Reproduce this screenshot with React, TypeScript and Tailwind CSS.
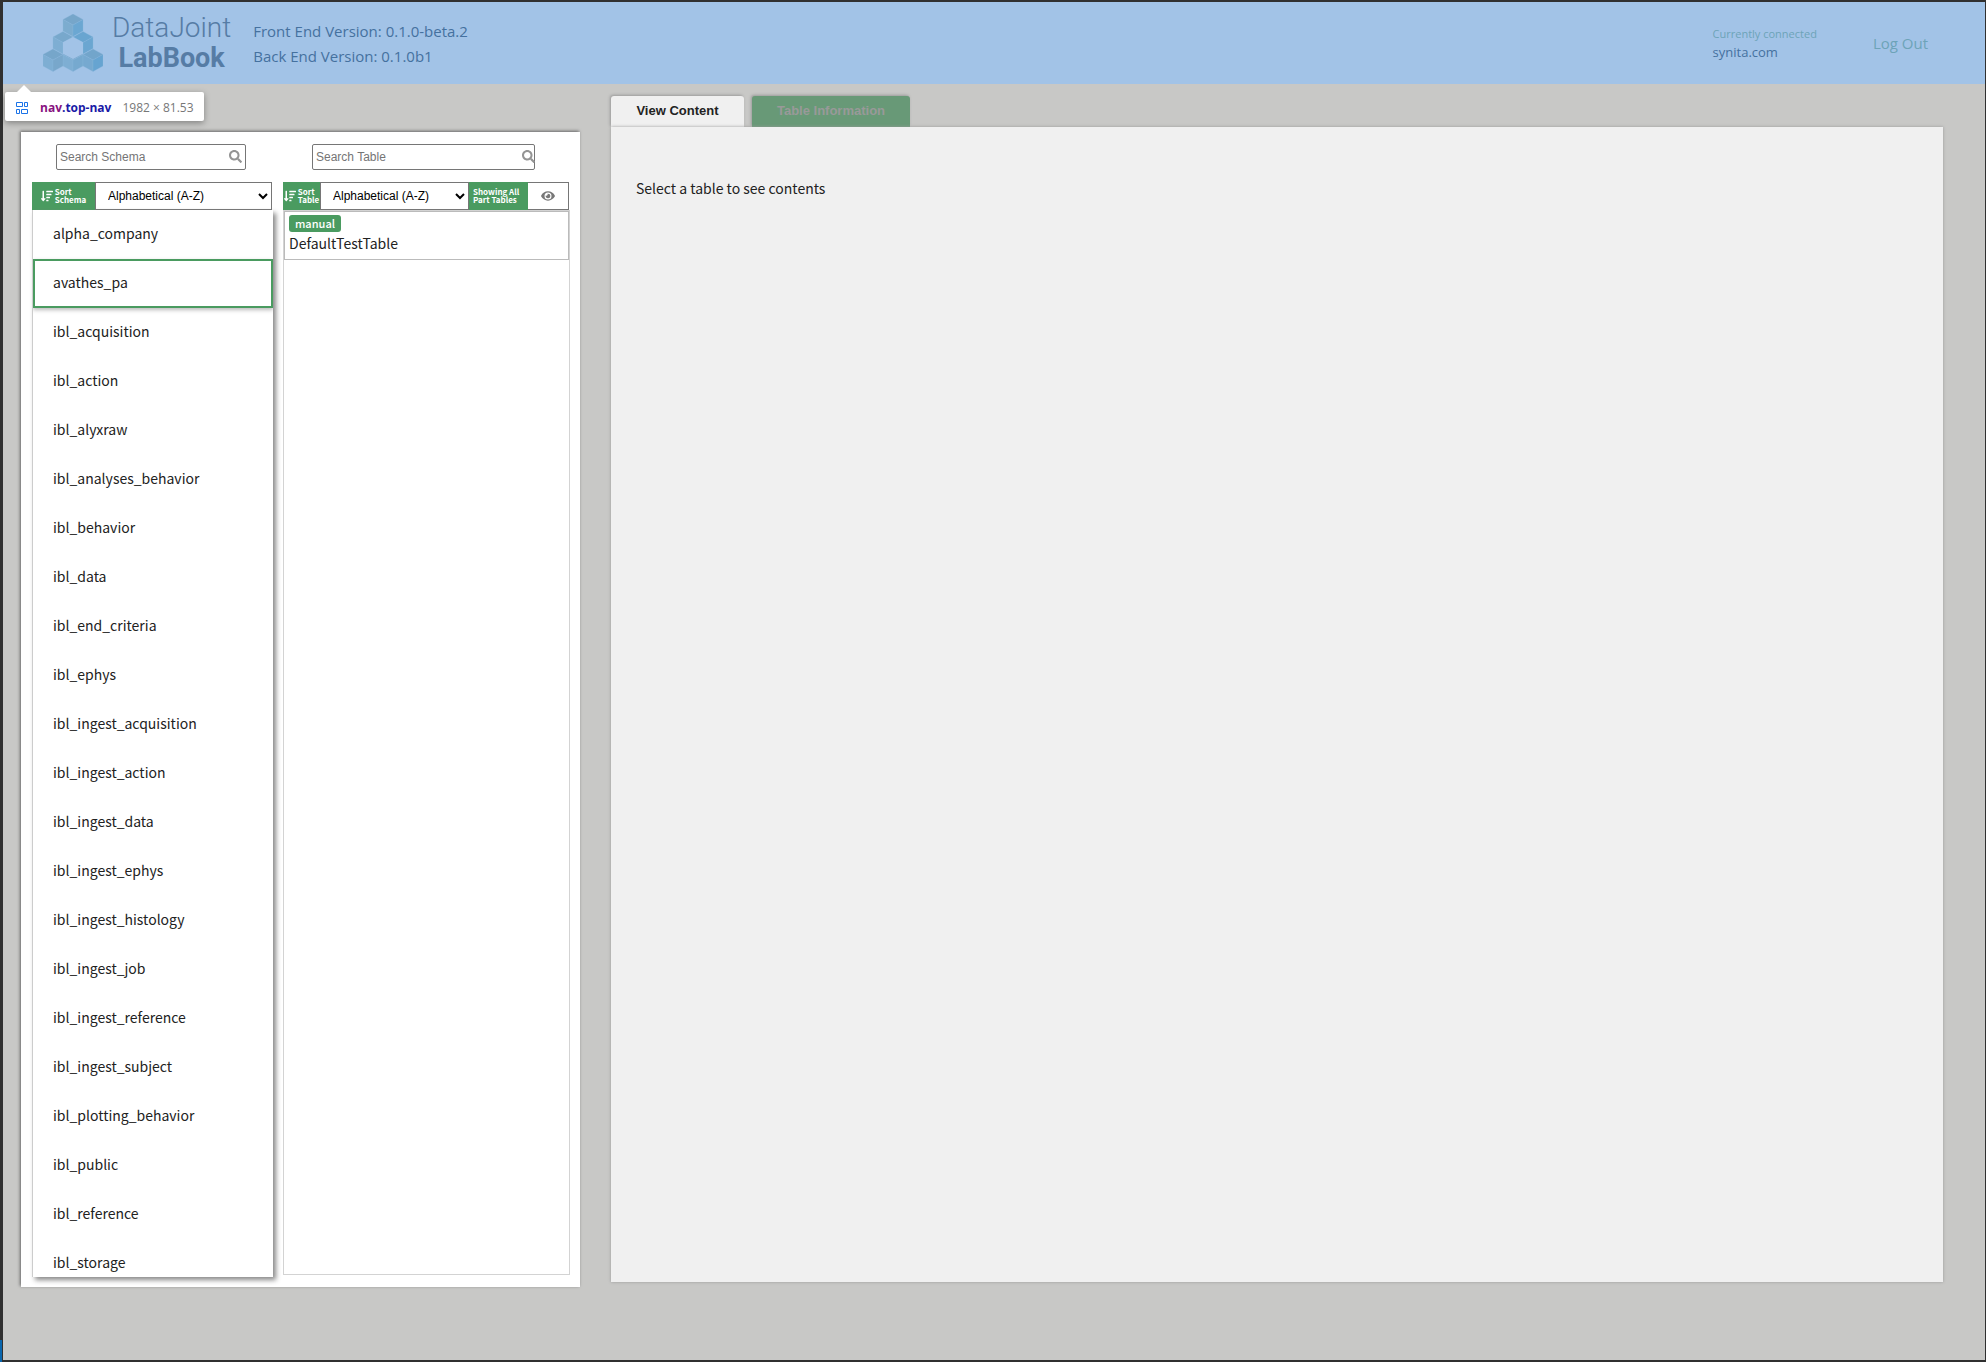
import { useState } from "react";
import { FaEye, FaSearch, FaSortAmountDown } from "react-icons/fa";

const SCHEMAS = [
  "alpha_company",
  "avathes_pa",
  "ibl_acquisition",
  "ibl_action",
  "ibl_alyxraw",
  "ibl_analyses_behavior",
  "ibl_behavior",
  "ibl_data",
  "ibl_end_criteria",
  "ibl_ephys",
  "ibl_ingest_acquisition",
  "ibl_ingest_action",
  "ibl_ingest_data",
  "ibl_ingest_ephys",
  "ibl_ingest_histology",
  "ibl_ingest_job",
  "ibl_ingest_reference",
  "ibl_ingest_subject",
  "ibl_plotting_behavior",
  "ibl_public",
  "ibl_reference",
  "ibl_storage",
];

// top corner of each cube in the logo, with its three face colours
const CUBES = [
  { x: 20, y: 17.5, top: "#78a8cc", left: "#7eaed3", right: "#76a9cf" },
  { x: 40, y: 17.5, top: "#69a5d0", left: "#69a5d0", right: "#6ba6d1" },
  { x: 30, y: 0, top: "#76a6ca", left: "#7caccf", right: "#6ba7d2" },
  { x: 30, y: 35, top: "#78a8cc", left: "#7eaed3", right: "#76a9cf" },
  { x: 10, y: 35, top: "#76a6ca", left: "#7eaed3", right: "#78a7cb" },
  { x: 50, y: 35, top: "#72a5cb", left: "#76a9d0", right: "#66a4d1" },
];

function Logo() {
  return (
    <a href="#" className="flex items-center gap-[9px] text-[#567ca5]">
      <svg className="h-[58px] w-[60px]" viewBox="0 0 60 58" aria-hidden="true">
        <g stroke="#8db7dc" strokeWidth="0.3">
          {CUBES.map(({ x, y, top, left, right }) => (
            <g key={`${x}-${y}`}>
              <path d={`M${x} ${y} l10 5.5 l-10 5.5 l-10 -5.5z`} fill={top} />
              <path d={`M${x - 10} ${y + 5.5} l10 5.5 v11.5 l-10 -5.5z`} fill={left} />
              <path d={`M${x} ${y + 11} l10 -5.5 v11.5 l-10 5.5z`} fill={right} />
            </g>
          ))}
        </g>
        <path d="M30 23 l10 5.2 v11.5 l-10 5.2 l-10 -5.2 v-11.5z" fill="#a2c3e7" />
      </svg>
      <span className="flex flex-col items-center font-[Roboto,sans-serif] text-[28px] leading-[30px]">
        <span className="font-light">DataJoint</span>
        <span className="text-[27px] font-bold">LabBook</span>
      </span>
    </a>
  );
}

function TopNav() {
  return (
    <nav className="relative flex h-[82px] shrink-0 items-center bg-[#a2c3e7] pr-[57px] pl-10 font-['Open_Sans',sans-serif] text-[#45719f]">
      <Logo />
      <div className="ml-[22px] pt-[2px] text-[15px] leading-[25px]">
        <p>Front End Version: 0.1.0-beta.2</p>
        <p>Back End Version: 0.1.0b1</p>
      </div>
      <div className="ml-auto text-[11px] leading-[18px]">
        <p className="text-[#6da3b8]">Currently connected</p>
        <p className="text-[13px]">synita.com</p>
      </div>
      <a href="#" className="ml-14 pt-px text-[15px] text-[#6da3b8]">
        Log Out
      </a>
      <ElementTip />
    </nav>
  );
}

function ElementTip() {
  return (
    <div
      role="tooltip"
      className="absolute top-[90px] left-[2px] flex h-[29px] items-center rounded-[2px] bg-white pt-[2px] pr-[10px] pl-[11px] text-xs whitespace-nowrap shadow-[0_2px_6px_rgba(0,0,0,0.35)]"
    >
      <svg className="absolute -top-[7px] left-[12px] h-[7px] w-[14px]" viewBox="0 0 14 7" aria-hidden="true">
        <path d="M0 7 L7 0 L14 7z" fill="#fff" />
      </svg>
      <svg className="mr-3 h-3 w-3" viewBox="0 0 12 12" fill="none" stroke="#1a73e8" aria-hidden="true">
        <path d="M.5 .5h6v4h-6zM8.5 .5h3v4h-3zM.5 7.5h3v4h-3zM5.5 7.5h6v4h-6z" />
      </svg>
      <span className="font-bold text-[#1a1aa6]">
        <span className="text-[#881280]">nav</span>.top-nav
      </span>
      <span className="ml-[11px] text-[#777]">1982 × 81.53</span>
    </div>
  );
}

type SearchBoxProps = {
  label: string;
  className: string;
  iconClassName: string;
};

function SearchBox({ label, className, iconClassName }: SearchBoxProps) {
  return (
    <div className={`relative ${className}`}>
      <input
        type="text"
        aria-label={label}
        placeholder={label}
        className="block h-[26px] w-full rounded-[2px] border border-[#767676] bg-white pl-[3px] font-['Liberation_Sans',sans-serif] text-xs placeholder:text-[#757575]"
      />
      <FaSearch className={`absolute top-[6px] size-[13px] text-[#949494] ${iconClassName}`} />
    </div>
  );
}

function SortSelect({ id }: { id: string }) {
  return (
    <select
      id={id}
      className="h-full min-w-0 flex-1 border border-[#767676] bg-white pl-2 font-['Liberation_Sans',sans-serif] text-xs text-black"
    >
      <option>Alphabetical (A-Z)</option>
      <option>Alphabetical (Z-A)</option>
    </select>
  );
}

export default function App() {
  const [selected, setSelected] = useState("avathes_pa");

  return (
    <div className="relative flex h-screen flex-col border-t-2 border-r border-b-2 border-l-[3px] border-[#303030] bg-[#c8c8c6] font-['Noto_Sans_CJK_SC',sans-serif] text-sm text-[#222]">
      <div className="absolute -bottom-[2px] -left-[3px] h-[22px] w-[2px] bg-[#0a66ad]" />
      <TopNav />

      <main className="flex min-h-0 flex-1 gap-[31px] pr-[42px] pl-[18px]">
        <aside className="mt-12 mb-[73px] flex w-[559px] shrink-0 gap-[10px] bg-white pt-3 pr-[10px] pl-[11px] shadow-[-1px_-1px_3px_#666]">
          <section className="flex w-[241px] flex-col pb-[10px]">
            <SearchBox label="Search Schema" className="ml-6 w-[190px]" iconClassName="right-1" />
            <div className="mt-3 mr-px flex h-7 shrink-0">
              <label
                htmlFor="schema-sort"
                className="flex w-[63px] items-center justify-center gap-[2px] bg-[#4a9b60] text-[8px] leading-[8px] font-bold text-white"
              >
                <FaSortAmountDown className="size-3" />
                <span>
                  Sort
                  <br />
                  Schema
                </span>
              </label>
              <SortSelect id="schema-sort" />
            </div>
            <div className="min-h-0 flex-1 overflow-hidden border-l border-[#ccc] shadow-[3px_3px_5px_#888]">
              {SCHEMAS.map((name) => (
                <button
                  key={name}
                  type="button"
                  onClick={() => setSelected(name)}
                  className={`block h-[49px] w-full pb-1 text-left ${
                    name === selected
                      ? "border-2 border-[#4a9b60] pl-[18px] shadow-[0_2px_4px_#bbb]"
                      : "pl-5"
                  }`}
                >
                  {name}
                </button>
              ))}
            </div>
          </section>

          <section className="flex flex-1 flex-col pb-3">
            <SearchBox label="Search Table" className="ml-[29px] w-[223px]" iconClassName="right-0" />
            <div className="mt-3 mr-px flex h-7 shrink-0">
              <label
                htmlFor="table-sort"
                className="flex w-[37px] items-center justify-center gap-[2px] bg-[#4a9b60] text-[8px] leading-[8px] font-bold text-white"
              >
                <FaSortAmountDown className="size-3" />
                <span>
                  Sort
                  <br />
                  Table
                </span>
              </label>
              <SortSelect id="table-sort" />
              <span className="flex w-[59px] items-center bg-[#4a9b60] pl-1 text-[8px] leading-[8px] font-bold text-white">
                Showing All
                <br />
                Part Tables
              </span>
              <button
                type="button"
                aria-label="Toggle part tables"
                className="flex w-[41px] items-center justify-center border border-l-0 border-[#767676]"
              >
                <FaEye className="size-[14px] text-[#777]" />
              </button>
            </div>
            <div className="flex-1 border border-[#d3d3d3]">
              <button
                type="button"
                className="flex h-[49px] w-full flex-col items-start border border-[#bbb] pt-[3px] pl-1 leading-[22px]"
              >
                <span className="rounded-[3px] bg-[#4a9b60] px-[6px] text-[11px] leading-[17px] font-medium text-white">
                  manual
                </span>
                DefaultTestTable
              </button>
            </div>
          </section>
        </aside>

        <section className="mt-3 mb-[78px] flex min-w-0 flex-1 flex-col">
          <div className="flex gap-2 font-['Liberation_Sans',sans-serif] text-[13px] font-bold">
            <button
              type="button"
              className="h-[31px] w-[133px] rounded-t-[3px] bg-[#f0f0f0] text-[#222] shadow-[-1px_-1px_3px_#999]"
            >
              View Content
            </button>
            <button
              type="button"
              className="h-[31px] w-[158px] rounded-t-[3px] bg-[#689977] text-[#999] shadow-[-1px_-1px_3px_#999]"
            >
              Table Information
            </button>
          </div>
          <div className="flex-1 bg-[#f0f0f0] px-[25px] pt-[49px] leading-6 shadow-[0_0_3px_#999]">
            <p>Select a table to see contents</p>
          </div>
        </section>
      </main>
    </div>
  );
}
